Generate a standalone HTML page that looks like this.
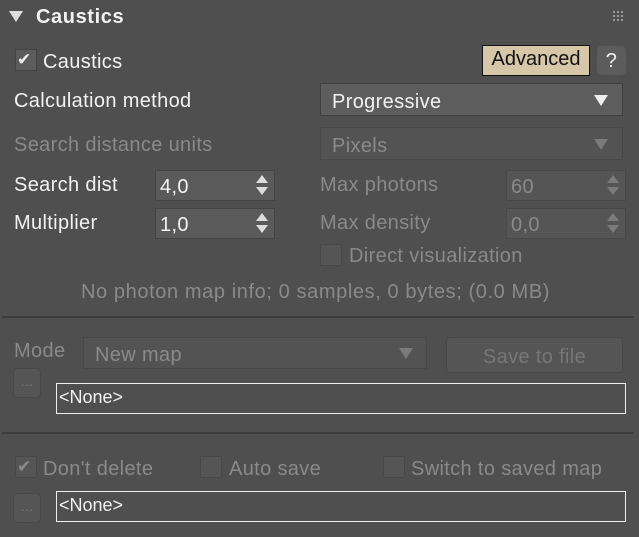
<!DOCTYPE html>
<html><head><style>
*{margin:0;padding:0;box-sizing:border-box}
body{width:639px;height:537px;background:#4f4f4f;font-family:"Liberation Sans",sans-serif;font-size:20px;letter-spacing:0.35px;color:#f2f2f2;position:relative;overflow:hidden}
.a{position:absolute;white-space:nowrap}
.d{color:#8a8a8a}
.cb{position:absolute;width:22px;height:22px;background:#5c5c5c;border:1px solid #444}
.cbd{background:#555;border:1px solid #484848}
.dd{position:absolute;background:#5d5d5d;border:1px solid #3f3f3f}
.ddd{background:#535353;border:1px solid #484848}
.sp{position:absolute;background:#5a5a5a;border:1px solid #444}
.spd{background:#555;border:1px solid #484848}
.tri{position:absolute;width:0;height:0;border-left:7px solid transparent;border-right:7px solid transparent;border-top:11px solid #eee}
.up{position:absolute;width:0;height:0;border-left:6px solid transparent;border-right:6px solid transparent;border-bottom:8px solid #ddd}
.dn{position:absolute;width:0;height:0;border-left:6px solid transparent;border-right:6px solid transparent;border-top:8px solid #ddd}
.sep{position:absolute;left:2px;width:632px;height:2px;background:#3c3c3c}
.none{position:absolute;left:56px;width:570px;height:31px;border:1px solid #eee;background:#4f4f4f;font-size:18px;letter-spacing:0;padding:3px 0 0 2px}
.btn{position:absolute;background:#555;border:1px solid #484848;border-radius:4px;color:#777;text-align:center}
</style></head><body>
<div class="tri" style="left:9px;top:11px;border-top-color:#ddd"></div>
<div class="a" style="left:36px;top:6px;font-weight:bold;font-size:20px;letter-spacing:0.6px">Caustics</div>
<svg class="a" style="left:613px;top:11px" width="12" height="10"><g fill="#999"><rect x="0" y="0" width="2" height="2"/><rect x="4" y="0" width="2" height="2"/><rect x="8" y="0" width="2" height="2"/><rect x="0" y="4" width="2" height="2"/><rect x="4" y="4" width="2" height="2"/><rect x="8" y="4" width="2" height="2"/><rect x="0" y="8" width="2" height="2"/><rect x="4" y="8" width="2" height="2"/><rect x="8" y="8" width="2" height="2"/></g></svg>

<div class="cb" style="left:15px;top:49px"></div>
<div class="a" style="left:17px;top:50px;font-size:17px;color:#eee">✔</div>
<div class="a" style="left:43px;top:51px">Caustics</div>
<div class="a" style="left:482px;top:45px;width:108px;height:31px;background:#d5c7a7;border:1px solid #111;color:#111;text-align:center;line-height:27px;letter-spacing:0">Advanced</div>
<div class="a" style="left:597px;top:46px;width:29px;height:29px;background:#5c5c5c;border-radius:5px;text-align:center;line-height:30px;color:#eee">?</div>

<div class="a" style="left:14px;top:90px">Calculation method</div>
<div class="dd" style="left:320px;top:83px;width:303px;height:33px"></div>
<div class="a" style="left:332px;top:91px">Progressive</div>
<div class="tri" style="left:594px;top:95px"></div>

<div class="a d" style="left:14px;top:134px">Search distance units</div>
<div class="dd ddd" style="left:320px;top:127px;width:303px;height:33px"></div>
<div class="a d" style="left:332px;top:135px">Pixels</div>
<div class="tri" style="left:594px;top:139px;border-top-color:#7a7a7a"></div>

<div class="a" style="left:14px;top:174px">Search dist</div>
<div class="sp" style="left:155px;top:170px;width:120px;height:31px"></div>
<div class="a" style="left:160px;top:176px">4,0</div>
<div class="up" style="left:256px;top:175px"></div><div class="dn" style="left:256px;top:187px"></div>
<div class="a" style="left:14px;top:212px">Multiplier</div>
<div class="sp" style="left:155px;top:208px;width:120px;height:31px"></div>
<div class="a" style="left:160px;top:214px">1,0</div>
<div class="up" style="left:256px;top:213px"></div><div class="dn" style="left:256px;top:225px"></div>

<div class="a d" style="left:320px;top:174px">Max photons</div>
<div class="sp spd" style="left:506px;top:170px;width:120px;height:31px"></div>
<div class="a d" style="left:511px;top:176px">60</div>
<div class="up" style="left:607px;top:175px;border-bottom-color:#7a7a7a"></div><div class="dn" style="left:607px;top:187px;border-top-color:#7a7a7a"></div>
<div class="a d" style="left:320px;top:212px">Max density</div>
<div class="sp spd" style="left:506px;top:208px;width:120px;height:31px"></div>
<div class="a d" style="left:511px;top:214px">0,0</div>
<div class="up" style="left:607px;top:213px;border-bottom-color:#7a7a7a"></div><div class="dn" style="left:607px;top:225px;border-top-color:#7a7a7a"></div>

<div class="cb cbd" style="left:320px;top:244px"></div>
<div class="a d" style="left:349px;top:245px">Direct visualization</div>
<div class="a d" style="left:81px;top:281px;letter-spacing:0.6px">No photon map info; 0 samples, 0 bytes; (0.0 MB)</div>
<div class="sep" style="top:316px"></div>

<div class="a d" style="left:14px;top:340px">Mode</div>
<div class="dd ddd" style="left:83px;top:337px;width:344px;height:32px"></div>
<div class="a d" style="left:95px;top:344px">New map</div>
<div class="tri" style="left:399px;top:348px;border-top-color:#7a7a7a"></div>
<div class="btn" style="left:446px;top:337px;width:177px;height:36px;line-height:38px;font-size:20px">Save to file</div>
<div class="btn" style="left:13px;top:368px;width:28px;height:30px;line-height:24px;font-size:14px">...</div>
<div class="none" style="top:383px">&lt;None&gt;</div>
<div class="sep" style="top:432px"></div>

<div class="cb cbd" style="left:15px;top:456px"></div>
<div class="a d" style="left:17px;top:457px;font-size:17px">✔</div>
<div class="a d" style="left:43px;top:458px">Don't delete</div>
<div class="cb cbd" style="left:200px;top:456px"></div>
<div class="a d" style="left:229px;top:458px">Auto save</div>
<div class="cb cbd" style="left:383px;top:456px"></div>
<div class="a d" style="left:411px;top:458px">Switch to saved map</div>
<div class="btn" style="left:13px;top:493px;width:28px;height:30px;line-height:24px;font-size:14px">...</div>
<div class="none" style="top:491px">&lt;None&gt;</div>
</body></html>
